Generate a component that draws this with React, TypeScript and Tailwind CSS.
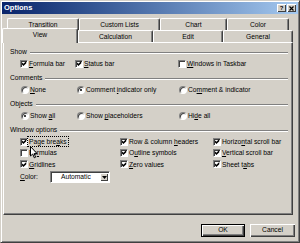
import React from 'react';

const FACE = 'bg-[#d4d0c8]';

const Check = ({ checked }: { checked?: boolean }) => (
  <span className="w-[8px] h-[8px] shrink-0 bg-white border border-t-[#808080] border-l-[#808080] border-r-white border-b-white shadow-[inset_1px_1px_#404040] flex items-center justify-center">
    {checked && (
      <svg width="5" height="5" viewBox="0 0 7 7">
        <path d="M0 2 L2 4 L6 0 L6 3 L2 7 L0 5 Z" fill="#000" />
      </svg>
    )}
  </span>
);

const Radio = ({ checked }: { checked?: boolean }) => (
  <span className="w-[8px] h-[8px] shrink-0 rounded-full bg-white border border-t-[#808080] border-l-[#808080] border-r-white border-b-white shadow-[inset_1px_1px_#404040] flex items-center justify-center">
    {checked && <span className="w-[2px] h-[2px] rounded-full bg-black" />}
  </span>
);

// label with one underlined access key
const Label = ({ text, k }: { text: string; k?: number }) => {
  if (k === undefined) return <span>{text}</span>;
  return (
    <span>
      {text.slice(0, k)}
      <u>{text[k]}</u>
      {text.slice(k + 1)}
    </span>
  );
};

const Item = ({
  text,
  k,
  checked,
  radio,
  focus,
}: {
  text: string;
  k?: number;
  checked?: boolean;
  radio?: boolean;
  focus?: boolean;
}) => (
  <div className="flex items-center">
    {radio ? <Radio checked={checked} /> : <Check checked={checked} />}
    <span
      className={
        focus
          ? 'border border-dotted border-black px-[1px] -ml-[1px] leading-[9px]'
          : 'border border-transparent leading-[9px]'
      }
    >
      <Label text={text} k={k} />
    </span>
  </div>
);

const Group = ({ title, first }: { title: string; first?: boolean }) => (
  <div className={`flex items-center h-[11px] pl-[6px] pr-[4px] gap-[3px] ${first ? '' : 'mt-[4px]'}`}>
    <span>{title}</span>
    <div className="flex-1 h-[2px] border-t border-t-[#808080] border-b border-b-white" />
  </div>
);

const Tab = ({ label, w, selected }: { label: string; w: string; selected?: boolean }) => (
  <div
    className={`${w} ${FACE} ${
      selected ? 'h-[15px] -mb-[1px] relative z-10' : 'h-[12px]'
    } border-t border-l border-r border-t-white border-l-white border-r-[#404040] rounded-t-[2px] shadow-[inset_-1px_0_#808080] flex items-start justify-center pt-[2px] leading-[8px] shrink-0`}
  >
    {label}
  </div>
);

const Button = ({ label, def, w }: { label: string; def?: boolean; w: string }) => (
  <div
    className={`${w} h-[13px] ${FACE} flex items-center justify-center ${
      def
        ? 'border border-black shadow-[inset_1px_1px_white,inset_-1px_-1px_#404040,inset_-2px_-2px_#808080]'
        : 'shadow-[inset_1px_1px_white,inset_-1px_-1px_#404040,inset_-2px_-2px_#808080]'
    }`}
  >
    {label}
  </div>
);

export default function App() {
  return (
    <div
      className={`relative w-[300px] h-[243px] ${FACE} p-[1px] border border-t-[#d4d0c8] border-l-[#d4d0c8] border-r-[#404040] border-b-[#404040] shadow-[inset_1px_1px_white,inset_-1px_-1px_#808080] text-[6.7px] text-black flex flex-col`}
      style={{ fontFamily: '"Liberation Sans", Arial, sans-serif' }}
    >
      {/* Title bar */}
      <div className="h-[12px] bg-gradient-to-r from-[#0a246a] to-[#a6caf0] flex items-center pl-[2px] pr-[2px]">
        <span className="text-white font-bold text-[7.5px] flex-1">Options</span>
        <div className="flex gap-[1px]">
          <div className={`w-[9px] h-[8px] ${FACE} shadow-[inset_1px_1px_white,inset_-1px_-1px_#404040] flex items-center justify-center text-[6px] font-bold leading-none`}>
            ?
          </div>
          <div className={`w-[9px] h-[8px] ${FACE} shadow-[inset_1px_1px_white,inset_-1px_-1px_#404040] flex items-center justify-center`}>
            <svg width="5" height="5" viewBox="0 0 5 5">
              <path d="M0.5 0.5 L4.5 4.5 M4.5 0.5 L0.5 4.5" stroke="#000" strokeWidth="1.2" />
            </svg>
          </div>
        </div>
      </div>

      {/* Tabs */}
      <div className="mt-[4px] h-[10px] flex ml-[5px]">
        <Tab label="Transition" w="w-[72px]" />
        <Tab label="Custom Lists" w="w-[81px]" />
        <Tab label="Chart" w="w-[67px]" />
        <Tab label="Color" w="w-[62px]" />
      </div>
      <div className="flex items-end">
        <Tab label="View" w="w-[76px]" selected />
        <Tab label="Calculation" w="w-[75px]" />
        <Tab label="Edit" w="w-[70px]" />
        <Tab label="General" w="w-[70px]" />
      </div>

      {/* Panel */}
      <div className="ml-[1px] w-[290px] h-[173px] border border-t-white border-l-white border-r-[#404040] border-b-[#404040] shadow-[inset_-1px_-1px_#808080] pt-[4px] flex flex-col">
        <Group title="Show" first />
        <div className="h-[11px] pl-[16px] grid grid-cols-[55px_103px_1fr] items-center">
          <Item text="Formula bar" k={0} checked />
          <Item text="Status bar" k={0} checked />
          <Item text="Windows in Taskbar" k={0} />
        </div>

        <Group title="Comments" />
        <div className="h-[11px] pl-[17px] grid grid-cols-[56px_102px_1fr] items-center">
          <Item text="None" k={0} radio />
          <Item text="Comment indicator only" k={8} radio checked />
          <Item text="Comment & indicator" k={2} radio />
        </div>

        <Group title="Objects" />
        <div className="h-[11px] pl-[17px] grid grid-cols-[56px_102px_1fr] items-center">
          <Item text="Show all" k={5} radio checked />
          <Item text="Show placeholders" k={5} radio />
          <Item text="Hide all" k={2} radio />
        </div>

        <Group title="Window options" />
        <div className="h-[11px] pl-[16px] grid grid-cols-[100px_93px_1fr] items-center">
          <Item text="Page breaks" k={8} checked focus />
          <Item text="Row & column headers" k={13} checked />
          <Item text="Horizontal scroll bar" k={6} checked />
        </div>
        <div className="h-[11px] pl-[16px] grid grid-cols-[100px_93px_1fr] items-center">
          <Item text="Formulas" k={2} />
          <Item text="Outline symbols" k={1} checked />
          <Item text="Vertical scroll bar" k={0} checked />
        </div>
        <div className="h-[12px] pl-[16px] grid grid-cols-[100px_93px_1fr] items-center">
          <Item text="Gridlines" k={0} checked />
          <Item text="Zero values" k={0} checked />
          <Item text="Sheet tabs" k={7} checked />
        </div>
        <div className="h-[12px] mt-[1px] pl-[16px] flex items-center">
          <span className="w-[30px]">
            <Label text="Color:" k={0} />
          </span>
          <div className="w-[60px] h-[12px] bg-white border border-t-[#808080] border-l-[#808080] border-r-white border-b-white shadow-[inset_1px_1px_#404040] flex items-center">
            <span className="flex-1 pl-[10px]">Automatic</span>
            <div className={`w-[8px] h-[8px] mr-[1px] ${FACE} shadow-[inset_1px_1px_white,inset_-1px_-1px_#404040] flex items-center justify-center`}>
              <svg width="5" height="3" viewBox="0 0 5 3">
                <path d="M0 0 L5 0 L2.5 3 Z" fill="#000" />
              </svg>
            </div>
          </div>
        </div>
      </div>

      {/* Buttons */}
      <div className="mt-[9px] flex justify-end gap-[5px] mr-[3px]">
        <Button label="OK" w="w-[44px]" def />
        <Button label="Cancel" w="w-[45px]" />
      </div>

      {/* Mouse pointer */}
      <svg className="absolute left-[29px] top-[145px]" width="8" height="13" viewBox="0 0 8 13">
        <path d="M0.5 0.5 L0.5 10 L2.7 8 L4.3 11.8 L5.6 11.2 L4.1 7.6 L7 7.6 Z" fill="#fff" stroke="#000" strokeWidth="1" />
      </svg>
    </div>
  );
}
